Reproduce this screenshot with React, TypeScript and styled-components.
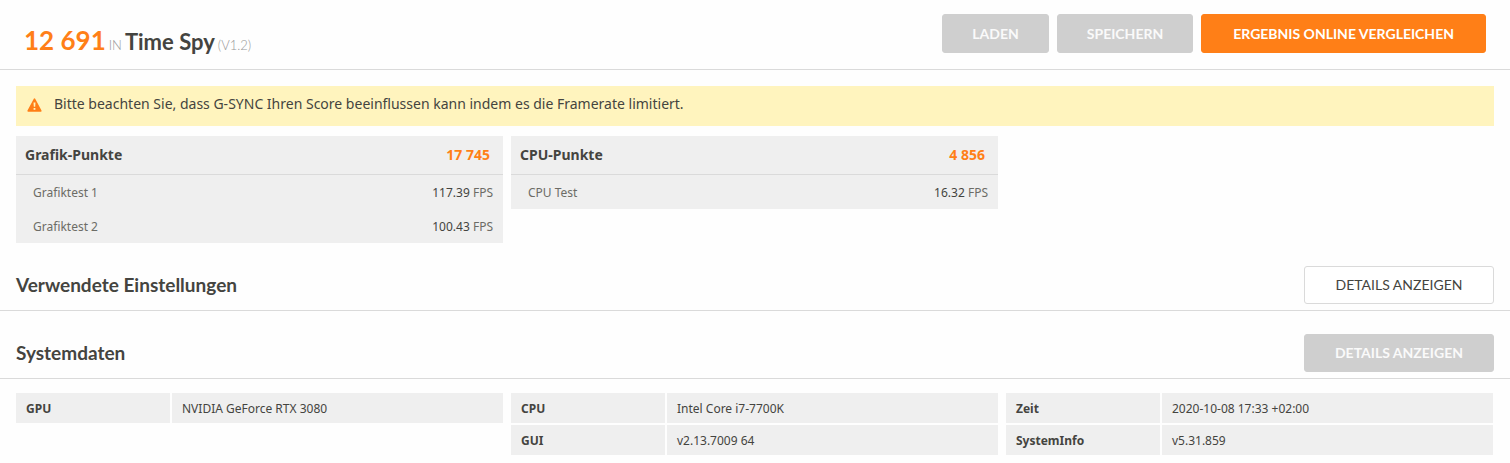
import React from 'react';
import styled, { createGlobalStyle, css } from 'styled-components';

const INK = '#444440';
const ORANGE = '#ff7f17';
const LINE = '#dadada';
const PANEL = '#efefef';

const GlobalStyle = createGlobalStyle`
  *, *::before, *::after { box-sizing: border-box; }
  body {
    margin: 0;
    background: #fefefe;
    color: ${INK};
    font-family: 'Noto Sans', 'Open Sans', sans-serif;
    font-size: 12px;
    line-height: 16px;
  }
  h1, h2, p { margin: 0; }
`;

const Header = styled.header`
  display: flex;
  justify-content: space-between;
  align-items: flex-start;
  padding: 14px 24px 10px;
  border-bottom: 1px solid ${LINE};
`;

const Title = styled.h1`
  display: flex;
  align-items: baseline;
  gap: 3px;
  padding-top: 12px;
  font-family: Lato, sans-serif;
  font-size: 22px;
  font-weight: 700;
  line-height: 28px;
  white-space: nowrap;
`;

const Score = styled.span`
  color: ${ORANGE};
  font-size: 26px;
`;

const Minor = styled.span`
  color: #989898;
  font-size: 13px;
  font-weight: 300;
`;

const Actions = styled.div`
  display: flex;
  gap: 8px;
`;

const Button = styled.button<{ $kind?: 'primary' | 'outline'; $tall?: boolean }>`
  height: ${(p) => (p.$tall ? 39 : 38)}px;
  padding: 0 29px;
  border: 1px solid #cfcfcf;
  border-radius: 3px;
  background: #cfcfcf;
  color: #fafafa;
  font-family: Lato, sans-serif;
  font-size: 14px;
  font-weight: 700;
  line-height: 18px;
  text-transform: uppercase;
  white-space: nowrap;
  ${(p) => p.$kind === 'primary' && css`
    padding: 0 31px;
    background: ${ORANGE};
    border-color: ${ORANGE};
    color: #fff;
  `}
  ${(p) => p.$kind === 'outline' && css`
    background: #fff;
    border-color: ${LINE};
    color: ${INK};
    font-weight: 400;
  `}
`;

const Notice = styled.div`
  display: flex;
  gap: 12px;
  margin: 16px 16px 10px;
  padding: 8px 11px 12px;
  background: #fff4be;
  font-size: 14px;
  line-height: 20px;

  svg {
    flex: none;
    margin-top: 4px;
  }
`;

const Columns = styled.div`
  display: grid;
  grid-template-columns: repeat(3, minmax(0, 1fr));
  gap: 8px;
  align-items: start;
  padding: 0 17px 0 16px;
`;

const ScoreTable = styled.table`
  width: 100%;
  border-collapse: separate;
  border-spacing: 0;
  background: ${PANEL};

  thead th {
    height: 39px;
    padding: 0 13px 0 9px;
    border-bottom: 1px solid ${LINE};
    font-size: 14px;
    text-align: left;
  }
  thead th:last-child {
    color: ${ORANGE};
    text-align: right;
  }
  tbody th {
    height: 34px;
    padding: 1px 17px 0;
    color: #6c6c66;
    font-weight: 400;
    text-align: left;
  }
  td {
    padding: 1px 10px 0;
    text-align: right;
  }
`;

const Unit = styled.span`
  color: #6c6c66;
`;

const SectionHead = styled.div`
  display: flex;
  justify-content: space-between;
  align-items: center;
  margin-top: 23px;
  padding: 0 16px 6px;
  border-bottom: 1px solid ${LINE};

  h2 {
    font-family: Lato, sans-serif;
    font-size: 19px;
    font-weight: 700;
    line-height: 24px;
  }

  button {
    width: 190px;
    padding: 0;
  }
`;

const SystemColumns = styled(Columns)`
  margin-top: 14px;
`;

const InfoTable = styled.table`
  width: 100%;
  border-collapse: separate;
  border-spacing: 0;
  table-layout: fixed;

  th, td {
    height: 30px;
    padding: 2px 10px 0;
    background: ${PANEL};
    text-align: left;
  }
  th {
    width: 156px;
    border-right: 2px solid #fefefe;
  }
  tr + tr > * {
    height: 32px;
    border-top: 2px solid #fefefe;
  }
`;

const WarningIcon = () => (
  <svg width="15" height="14" viewBox="0 0 15 14" aria-hidden="true">
    <path d="M7.5 1.2 13.8 13H1.2Z" fill={ORANGE} stroke={ORANGE} strokeWidth="1.6" strokeLinejoin="round" />
    <path d="M6.5 4.6h2l-.3 4.2H6.8Z" fill="#fff4be" />
    <rect x="6.6" y="10" width="1.8" height="1.8" fill="#fff4be" />
  </svg>
);

const scores = [
  { name: 'Grafik-Punkte', value: '17 745', tests: [['Grafiktest 1', '117.39'], ['Grafiktest 2', '100.43']] },
  { name: 'CPU-Punkte', value: '4 856', tests: [['CPU Test', '16.32']] },
];

const system = [
  [['GPU', 'NVIDIA GeForce RTX 3080']],
  [['CPU', 'Intel Core i7-7700K'], ['GUI', 'v2.13.7009 64']],
  [['Zeit', '2020-10-08 17:33 +02:00'], ['SystemInfo', 'v5.31.859']],
];

export default function App() {
  return (
    <>
      <GlobalStyle />
      <Header>
        <Title>
          <Score>12 691</Score> <Minor>IN</Minor> <span>Time Spy</span> <Minor>(V1.2)</Minor>
        </Title>
        <Actions>
          <Button $tall>Laden</Button>
          <Button $tall>Speichern</Button>
          <Button $tall $kind="primary">Ergebnis online vergleichen</Button>
        </Actions>
      </Header>
      <main>
        <Notice role="note">
          <WarningIcon />
          <p>Bitte beachten Sie, dass G-SYNC Ihren Score beeinflussen kann indem es die Framerate limitiert.</p>
        </Notice>
        <Columns>
          {scores.map((s) => (
            <ScoreTable key={s.name}>
              <thead>
                <tr>
                  <th scope="col">{s.name}</th>
                  <th scope="col">{s.value}</th>
                </tr>
              </thead>
              <tbody>
                {s.tests.map(([name, fps]) => (
                  <tr key={name}>
                    <th scope="row">{name}</th>
                    <td>{fps} <Unit>FPS</Unit></td>
                  </tr>
                ))}
              </tbody>
            </ScoreTable>
          ))}
        </Columns>
        <SectionHead>
          <h2>Verwendete Einstellungen</h2>
          <Button $kind="outline">Details anzeigen</Button>
        </SectionHead>
        <SectionHead>
          <h2>Systemdaten</h2>
          <Button>Details anzeigen</Button>
        </SectionHead>
        <SystemColumns>
          {system.map((rows, i) => (
            <InfoTable key={i}>
              <tbody>
                {rows.map(([label, value]) => (
                  <tr key={label}>
                    <th scope="row">{label}</th>
                    <td>{value}</td>
                  </tr>
                ))}
              </tbody>
            </InfoTable>
          ))}
        </SystemColumns>
      </main>
    </>
  );
}
